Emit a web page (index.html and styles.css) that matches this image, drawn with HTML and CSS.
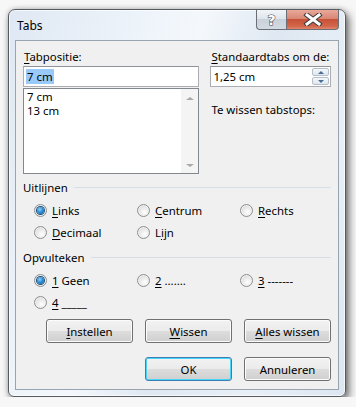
FILE: index.html
```html
<!DOCTYPE html>
<html lang="nl">
<head>
    <meta charset="UTF-8">
    <title>Tabs</title>
    <link rel="stylesheet" href="styles.css">
</head>
<body>
    <div class="window">
        <div class="titlebar">
            <span class="title">Tabs</span>
            <div class="caption-buttons">
                <span class="cap-btn help">?</span>
                <span class="cap-btn close">
                    <svg width="20" height="13" viewBox="0 0 20 13">
                        <path d="M4 2 L16 11 M16 2 L4 11" stroke="#3b3b3b" stroke-width="5" stroke-linecap="square" fill="none"/>
                        <path d="M4 2 L16 11 M16 2 L4 11" stroke="#fff" stroke-width="3" stroke-linecap="square" fill="none"/>
                    </svg>
                </span>
            </div>
        </div>

        <div class="client">
            <div class="top">
                <div class="col-left">
                    <div class="lbl"><u>T</u>abpositie:</div>
                    <div class="textbox"><span class="sel">7 cm</span></div>
                    <div class="listbox">
                        <div class="items">
                            <div>7 cm</div>
                            <div>13 cm</div>
                        </div>
                        <div class="vscroll">
                            <span class="arr arr-up"></span>
                            <span class="arr arr-down"></span>
                        </div>
                    </div>
                </div>
                <div class="col-right">
                    <div class="lbl"><u>S</u>tandaardtabs om de:</div>
                    <div class="spinbox">
                        <span class="val">1,25 cm</span>
                        <div class="spin">
                            <span class="spin-btn"><i class="tri-up"></i></span>
                            <span class="spin-btn"><i class="tri-down"></i></span>
                        </div>
                    </div>
                    <div class="lbl wissen-lbl">Te wissen tabstops:</div>
                </div>
            </div>

            <div class="group">
                <div class="group-head"><span>Uitlijnen</span></div>
                <div class="radios">
                    <div class="radio checked"><span class="circle"></span><span><u>L</u>inks</span></div>
                    <div class="radio"><span class="circle"></span><span><u>C</u>entrum</span></div>
                    <div class="radio"><span class="circle"></span><span><u>R</u>echts</span></div>
                    <div class="radio"><span class="circle"></span><span><u>D</u>ecimaal</span></div>
                    <div class="radio"><span class="circle"></span><span>L<u>ij</u>n</span></div>
                </div>
            </div>

            <div class="group">
                <div class="group-head"><span>Opvulteken</span></div>
                <div class="radios">
                    <div class="radio checked"><span class="circle"></span><span><u>1</u> Geen</span></div>
                    <div class="radio"><span class="circle"></span><span><u>2</u> .......</span></div>
                    <div class="radio"><span class="circle"></span><span><u>3</u> -------</span></div>
                    <div class="radio"><span class="circle"></span><span><u>4</u> _____</span></div>
                </div>
            </div>

            <div class="btn-row">
                <button class="btn"><u>I</u>nstellen</button>
                <button class="btn"><u>W</u>issen</button>
                <button class="btn"><u>A</u>lles wissen</button>
            </div>
            <div class="btn-row last">
                <button class="btn default">OK</button>
                <button class="btn">Annuleren</button>
            </div>
        </div>
    </div>
</body>
</html>
```

FILE: styles.css
```css
body {
    margin: 0;
    padding: 9px 0 0 8px;
    background-color: #f7f7f7;
    font-family: "Noto Sans", "Open Sans", sans-serif;
    font-size: 11.4px;
    color: #000;
}

.window {
    width: 324px;
    padding: 0 6px 6px 6px;
    border: 1px solid #565b61;
    border-radius: 7px 7px 6px 6px;
    background: linear-gradient(110deg, #dfe8f3 0%, #eef4fa 30%, #f4f8fc 42%, #dfe8f2 58%, #e8eff7 80%, #dce6f1 100%);
    box-shadow: inset 0 0 0 1px rgba(255, 255, 255, 0.7), 3px 4px 9px rgba(0, 0, 0, 0.55), 0 0 5px rgba(0, 0, 0, 0.2);
}

.titlebar {
    height: 30px;
    display: flex;
    align-items: flex-start;
}

.title {
    margin: 8px 0 0 2px;
    line-height: 15px;
    font-size: 12px;
    color: #000;
}

.caption-buttons {
    margin-left: auto;
    display: flex;
}

.cap-btn {
    height: 19px;
    border: 1px solid #6b6f75;
    border-top: none;
    display: flex;
    align-items: center;
    justify-content: center;
}

.help {
    width: 29px;
    border-right: none;
    border-radius: 0 0 0 4px;
    background: linear-gradient(#f2f5f8 0%, #dfe5ec 45%, #c9d1da 50%, #d3dae2 100%);
    font-family: "DejaVu Sans", sans-serif;
    font-weight: bold;
    font-size: 14px;
    color: #fff;
    -webkit-text-stroke: 1px #3c3c3c;
    paint-order: stroke fill;
}

.close {
    width: 51px;
    border-radius: 0 0 4px 0;
    background: linear-gradient(#e9a99b 0%, #d98774 45%, #c75238 50%, #d2664a 85%, #e0866c 100%);
}

.client {
    height: 348px;
    border: 1px solid #98a4b0;
    background-color: #f0f0f0;
    padding: 0 7px 0 7px;
}

.top {
    display: flex;
    gap: 11px;
    padding-top: 8px;
}

.col-left {
    width: 177px;
}

.col-right {
    width: 121px;
}

.lbl {
    line-height: 15px;
    padding-left: 1px;
    white-space: nowrap;
}

.textbox {
    margin-top: 2px;
    border: 1px solid #abadb3;
    border-top-color: #8e9299;
    background-color: #fff;
    padding: 2px 0 0 2px;
    box-sizing: border-box;
    height: 21px;
}

.sel {
    display: inline-block;
    background-color: #99c9f8;
    line-height: 15px;
    padding: 0 1px;
}

.listbox {
    margin-top: 1px;
    height: 86px;
    box-sizing: border-box;
    border: 1px solid #828790;
    background-color: #fff;
    display: flex;
}

.items {
    flex: 1;
    padding: 1px 0 0 3px;
    line-height: 14px;
}

.vscroll {
    width: 17px;
    background-color: #f4f4f4;
    border-left: 1px solid #fff;
    display: flex;
    flex-direction: column;
    justify-content: space-between;
    align-items: center;
    padding: 8px 0 6px;
}

.arr {
    width: 0;
    height: 0;
    border-left: 4px solid transparent;
    border-right: 4px solid transparent;
}

.arr-up {
    border-bottom: 3px solid #a9a9a9;
}

.arr-down {
    border-top: 3px solid #a9a9a9;
}

.spinbox {
    margin-top: 2px;
    height: 19px;
    border: 1px solid #abadb3;
    border-top-color: #8e9299;
    background-color: #fff;
    display: flex;
}

.val {
    flex: 1;
    padding: 2px 0 0 2px;
    line-height: 15px;
}

.spin {
    width: 17px;
    display: flex;
    flex-direction: column;
    padding: 1px;
    gap: 1px;
}

.spin-btn {
    flex: 1;
    border: 1px solid #b5bfc9;
    border-radius: 2px;
    background: linear-gradient(#f5f8fb, #dfe6ee);
    display: flex;
    align-items: center;
    justify-content: center;
}

.tri-up, .tri-down {
    width: 0;
    height: 0;
    border-left: 3px solid transparent;
    border-right: 3px solid transparent;
}

.tri-up {
    border-bottom: 3px solid #4a6c94;
}

.tri-down {
    border-top: 3px solid #4a6c94;
}

.wissen-lbl {
    margin-top: 15px;
}

.group {
    margin-top: 6px;
}

.group + .group {
    margin-top: 7px;
}

.group-head {
    display: flex;
    align-items: center;
    gap: 6px;
    line-height: 15px;
}

.group-head::after {
    content: "";
    flex: 1;
    height: 1px;
    background-color: #d5dfe5;
}

.radios {
    display: grid;
    grid-template-columns: repeat(3, 103px);
    grid-auto-rows: 22px;
    padding: 4px 0 0 11px;
}

.radio {
    display: flex;
    align-items: center;
    gap: 5px;
    line-height: 15px;
}

.circle {
    width: 11px;
    height: 11px;
    border-radius: 50%;
    border: 1px solid #8f8f8f;
    background: radial-gradient(circle at 60% 65%, #ffffff 0%, #eaeaea 45%, #cfcfcf 100%);
    box-shadow: inset 0 0 0 1px #f2f2f2;
    display: flex;
    align-items: center;
    justify-content: center;
}

.checked .circle::after {
    content: "";
    width: 7px;
    height: 7px;
    border-radius: 50%;
    background: radial-gradient(circle at 40% 35%, #8ed0f7 0%, #2a8ad4 50%, #15507f 100%);
    box-shadow: 0 0 0 1px #1c4f7a;
}

.btn-row {
    display: flex;
    justify-content: flex-end;
    gap: 12px;
    margin-top: 6px;
}

.btn-row.last {
    margin-top: 14px;
}

.btn {
    width: 87px;
    height: 24px;
    font-family: inherit;
    font-size: 11.4px;
    color: #000;
    border: 1px solid #707070;
    border-radius: 3px;
    background: linear-gradient(#f2f2f2 0%, #ebebeb 49%, #dddddd 50%, #cfcfcf 100%);
    box-shadow: inset 0 0 0 1px #fcfcfc;
    padding: 0;
}

.btn.default {
    border-color: #3c7fb1;
    box-shadow: inset 0 0 0 1px #48d3f8;
}

u {
    text-decoration-thickness: 1px;
    text-underline-offset: 2px;
}
```
